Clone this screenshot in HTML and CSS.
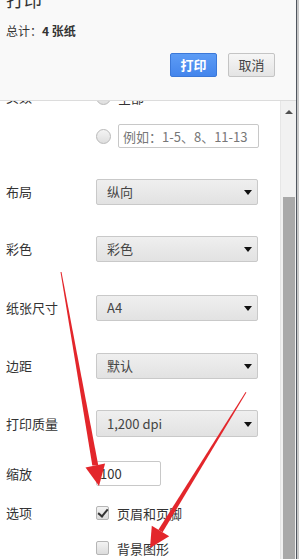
FILE: index.html
```html
<!DOCTYPE html>
<html lang="zh-CN">
<head>
    <meta charset="UTF-8">
    <meta name="viewport" content="width=device-width, initial-scale=1.0">
    <title>打印</title>
    <link rel="stylesheet" href="styles.css">
</head>
<body>
    <div class="dialog">
        <!-- Kopfbereich mit Summe und Buttons -->
        <header class="summary">
            <h1 class="title">打印</h1>
            <div class="total">总计：<b>4 张纸</b></div>
            <div class="actions">
                <button class="btn btn-primary">打印</button>
                <button class="btn">取消</button>
            </div>
        </header>

        <div class="body">
            <div class="settings">
                <div class="settings-inner">
                    <div class="setting pages">
                        <div class="label">页数</div>
                        <div class="control">
                            <div class="radio-line"><span class="radio"></span><span>全部</span></div>
                            <div class="radio-line range"><span class="radio"></span><input class="text-input" placeholder="例如：1-5、8、11-13"></div>
                        </div>
                    </div>

                    <div class="setting row-first">
                        <div class="label">布局</div>
                        <div class="select">纵向</div>
                    </div>
                    <div class="setting">
                        <div class="label">彩色</div>
                        <div class="select">彩色</div>
                    </div>
                    <div class="setting row-wide">
                        <div class="label">纸张尺寸</div>
                        <div class="select">A4</div>
                    </div>
                    <div class="setting row-mid">
                        <div class="label">边距</div>
                        <div class="select">默认</div>
                    </div>
                    <div class="setting">
                        <div class="label">打印质量</div>
                        <div class="select select-tall">1,200 dpi</div>
                    </div>
                    <div class="setting row-scale">
                        <div class="label">缩放</div>
                        <input class="scale-input" value="100">
                    </div>
                    <div class="setting row-options">
                        <div class="label">选项</div>
                        <div class="check-line"><span class="checkbox checked"></span>页眉和页脚</div>
                    </div>
                    <div class="setting row-option2">
                        <div class="label"></div>
                        <div class="check-line"><span class="checkbox"></span>背景图形</div>
                    </div>
                </div>
            </div>

            <!-- Scrollleiste -->
            <div class="scrollbar">
                <div class="scroll-up"></div>
                <div class="scroll-thumb"></div>
            </div>
        </div>
    </div>

    <!-- rote Pfeile (Markierung) -->
    <svg class="annotations" width="299" height="559" viewBox="0 0 299 559">
        <polygon points="60.5,272 61.5,272 98.3,465.4 92.3,465.4" fill="#e3262b"/>
        <polygon points="85.5,467.5 105.1,463.5 99,486" fill="#e3262b"/>
        <polygon points="245.6,392 246.4,392.5 162.6,532.3 158.4,529.7" fill="#e3262b"/>
        <polygon points="169.2,536.3 151.8,525.7 150,548" fill="#e3262b"/>
    </svg>
</body>
</html>
```

FILE: styles.css
```css
body {
    margin: 0;
    padding: 0;
    width: 299px;
    height: 559px;
    overflow: hidden;
    background-color: #c8c8c8;
    font-family: "Noto Sans CJK SC", "Liberation Sans", sans-serif;
    font-size: 13px;
    color: #333;
    position: relative;
}

.dialog {
    width: 296px;
    height: 559px;
    display: flex;
    flex-direction: column;
    background-color: #fff;
    border-right: 1px solid #50565f;
}

/* Kopfbereich */
.summary {
    height: 101px;
    flex-shrink: 0;
    background-color: #f9f9f9;
    border-bottom: 1px solid #dcdcdc;
    padding-left: 6px;
    padding-right: 21px;
    box-sizing: border-box;
    display: flex;
    flex-direction: column;
    overflow: hidden;
}

.title {
    margin: -12px 0 0 0;
    font-size: 18px;
    font-weight: normal;
    line-height: 22px;
    color: #333;
}

.total {
    margin-top: 12px;
    line-height: 18px;
    font-size: 12px;
}

.total b {
    font-weight: bold;
}

.actions {
    margin-top: 13px;
    display: flex;
    justify-content: flex-end;
    gap: 11px;
}

.btn {
    width: 47px;
    height: 24px;
    padding: 0;
    font-family: inherit;
    font-size: 13px;
    line-height: 20px;
    color: #444;
    background: linear-gradient(#f6f6f6, #e4e4e4);
    border: 1px solid #c4c4c4;
    border-radius: 2px;
}

.btn-primary {
    color: #fff;
    font-weight: bold;
    background: linear-gradient(#5d9cf5, #4485ec);
    border-color: #3b78d8;
}

/* Einstellungen */
.body {
    flex: 1;
    display: flex;
    min-height: 0;
}

.settings {
    flex: 1;
    overflow: hidden;
}

.settings-inner {
    margin-top: -16px;
}

.setting {
    display: flex;
    align-items: center;
    margin-top: 31px;
}

.setting.pages {
    align-items: flex-start;
    margin-top: 0;
}

.setting.row-first {
    margin-top: 31px;
}

.setting.row-wide {
    margin-top: 33px;
}

.setting.row-mid {
    margin-top: 32px;
}

.setting.row-scale {
    margin-top: 24px;
}

.setting.row-options {
    margin-top: 17px;
    height: 20px;
}

.setting.row-option2 {
    margin-top: 15px;
    height: 20px;
}

.label {
    width: 96px;
    padding-left: 6px;
    box-sizing: border-box;
    flex-shrink: 0;
    line-height: 24px;
}

.radio-line {
    display: flex;
    align-items: center;
    height: 24px;
    gap: 7px;
}

.radio-line.range {
    margin-top: 15px;
}

.radio {
    width: 13px;
    height: 13px;
    border-radius: 50%;
    border: 1px solid #b9b9b9;
    background: linear-gradient(#f4f4f4, #dedede);
    flex-shrink: 0;
}

.text-input {
    width: 141px;
    height: 24px;
    box-sizing: border-box;
    border: 1px solid #c8c8c8;
    border-radius: 2px;
    padding: 0 4px;
    font-family: inherit;
    font-size: 13px;
    color: #333;
    background-color: #fff;
}

.text-input::placeholder {
    color: #777;
}

.select {
    position: relative;
    width: 162px;
    height: 26px;
    box-sizing: border-box;
    border: 1px solid #c9c9c9;
    border-radius: 2px;
    background: linear-gradient(#efefef, #e2e2e2);
    padding-left: 10px;
    line-height: 24px;
    color: #444;
}

.select-tall {
    height: 27px;
    line-height: 25px;
}

/* Dropdown-Dreieck */
.select::after {
    content: "";
    position: absolute;
    right: 5px;
    top: 50%;
    margin-top: -2px;
    border-left: 4px solid transparent;
    border-right: 4px solid transparent;
    border-top: 5px solid #111;
}

.scale-input {
    width: 65px;
    height: 25px;
    box-sizing: border-box;
    border: 1px solid #c8c8c8;
    border-radius: 2px;
    padding: 0 3px;
    font-family: inherit;
    font-size: 13px;
    color: #333;
}

.check-line {
    display: flex;
    align-items: center;
    gap: 8px;
}

.checkbox {
    position: relative;
    width: 11px;
    height: 12px;
    border: 1px solid #b5b5b5;
    border-radius: 2px;
    background: linear-gradient(#f3f3f3, #dcdcdc);
}

.checkbox.checked::after {
    content: "";
    position: absolute;
    left: 3px;
    top: 0;
    width: 4px;
    height: 8px;
    border-right: 2px solid #333;
    border-bottom: 2px solid #333;
    transform: rotate(40deg);
}

/* Scrollleiste */
.scrollbar {
    width: 16px;
    flex-shrink: 0;
    background-color: #f1f1f1;
    border-left: 1px solid #e6e6e6;
    box-sizing: border-box;
    display: flex;
    flex-direction: column;
    align-items: center;
}

.scroll-up {
    margin-top: 9px;
    border-left: 4px solid transparent;
    border-right: 4px solid transparent;
    border-bottom: 4px solid #505050;
}

.scroll-thumb {
    margin-top: 83px;
    width: 12px;
    flex: 1;
    background-color: #a9a9a9;
}

.annotations {
    position: absolute;
    left: 0;
    top: 0;
    pointer-events: none;
}
```
